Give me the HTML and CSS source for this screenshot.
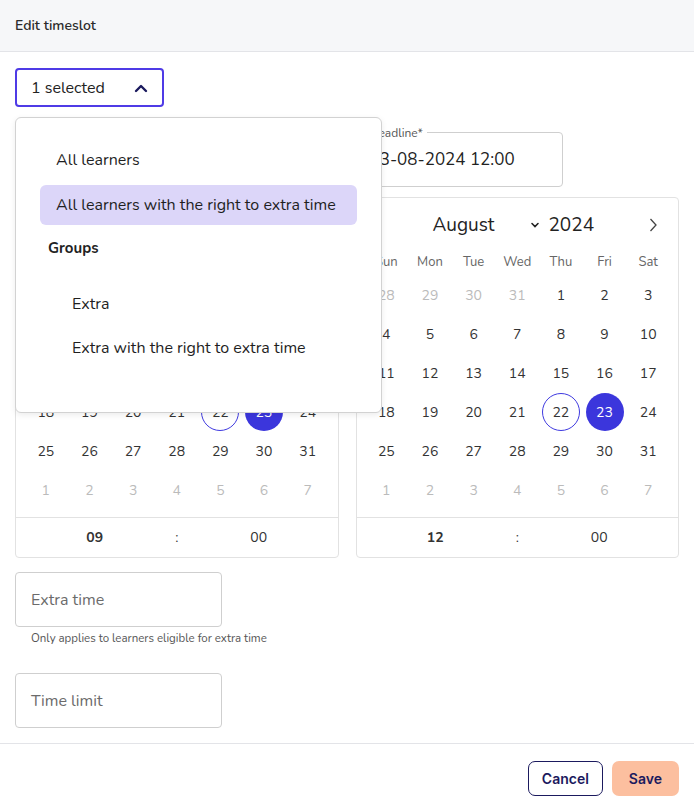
FILE: index.html
```html
<!DOCTYPE html>
<html lang="en">
<head>
    <meta charset="UTF-8">
    <meta name="viewport" content="width=device-width, initial-scale=1.0">
    <title>Edit timeslot</title>
    <link rel="stylesheet" href="styles.css">
</head>
<body>

    <header class="modal-head">Edit timeslot</header>

    <main class="modal-body">
        <div class="select-wrap">
            <button class="select">
                <span>1 selected</span>
                <svg width="14" height="10" viewBox="0 0 14 10"><path d="M2 8 L7 3 L12 8" fill="none" stroke="#1b1a5e" stroke-width="2.4" stroke-linecap="round" stroke-linejoin="round"/></svg>
            </button>

            <!-- open dropdown menu -->
            <div class="menu">
                <div class="menu-item">All learners</div>
                <div class="menu-item active">All learners with the right to extra time</div>
                <div class="menu-group">Groups</div>
                <div class="menu-item sub first">Extra</div>
                <div class="menu-item sub">Extra with the right to extra time</div>
            </div>
        </div>

        <div class="pickers">
            <div class="picker">
                <div class="field">
                    <span class="field-label">Start*</span>
                    <span class="field-value">22-08-2024 09:00</span>
                </div>
                <div class="calendar" id="calStart" data-time="09"></div>
            </div>
            <div class="picker">
                <div class="field">
                    <span class="field-label">Deadline*</span>
                    <span class="field-value">23-08-2024 12:00</span>
                </div>
                <div class="calendar" id="calEnd" data-time="12"></div>
            </div>
        </div>

        <div class="input">Extra time</div>
        <p class="hint">Only applies to learners eligible for extra time</p>

        <div class="input limit">Time limit</div>
    </main>

    <footer class="modal-foot">
        <button class="btn btn-outline">Cancel</button>
        <button class="btn btn-save">Save</button>
    </footer>

    <script>
        // Build the two August 2024 calendars
        const weekdays = ['Sun', 'Mon', 'Tue', 'Wed', 'Thu', 'Fri', 'Sat'];

        function buildCalendar(el) {
            let html = '<div class="cal-head">';
            html += '<svg class="cal-nav" width="10" height="16" viewBox="0 0 10 16"><path d="M7.5 2 L2 8 L7.5 14" fill="none" stroke="#444" stroke-width="1.3"/></svg>';
            html += '<div class="cal-title"><span class="cal-month">August<svg width="10" height="8" viewBox="0 0 10 8"><path d="M2 2.5 L5 5.5 L8 2.5" fill="none" stroke="#222" stroke-width="1.6" stroke-linecap="round"/></svg></span><span class="cal-year">2024</span></div>';
            html += '<svg class="cal-nav" width="10" height="16" viewBox="0 0 10 16"><path d="M2.5 2 L8 8 L2.5 14" fill="none" stroke="#444" stroke-width="1.3"/></svg>';
            html += '</div>';

            html += '<div class="cal-grid">';
            weekdays.forEach(d => { html += `<span class="cal-wd">${d}</span>`; });

            // previous month tail: 28-31 July
            [28, 29, 30, 31].forEach(d => { html += `<span class="cal-day muted">${d}</span>`; });
            for (let d = 1; d <= 31; d++) {
                let cls = 'cal-day';
                if (d === 22) cls += ' today';
                if (d === 23) cls += ' picked';
                html += `<span class="${cls}">${d}</span>`;
            }
            for (let d = 1; d <= 7; d++) {
                html += `<span class="cal-day muted">${d}</span>`;
            }
            html += '</div>';

            html += `<div class="cal-time"><b>${el.dataset.time}</b><span>:</span><span>00</span></div>`;
            el.innerHTML = html;
        }

        document.querySelectorAll('.calendar').forEach(buildCalendar);
    </script>

</body>
</html>
```

FILE: styles.css
```css
* {
    box-sizing: border-box;
}
body {
    margin: 0;
    font-family: "Nunito", "Lato", "Open Sans", sans-serif;
    color: #222;
    background: #fff;
}
button {
    font-family: inherit;
}
.modal-head {
    height: 52px;
    padding: 0 15px;
    line-height: 51px;
    font-size: 14px;
    font-weight: 600;
    color: #2b2b2b;
    background: #f6f7f9;
    border-bottom: 1px solid #e3e4e8;
}
.modal-body {
    padding: 16px 15px 15px;
}
.select-wrap {
    position: relative;
}
.select {
    width: 149px;
    height: 39px;
    display: flex;
    align-items: center;
    justify-content: space-between;
    padding: 0 14px 0 14px;
    font-size: 16px;
    color: #222;
    background: #fff;
    border: 2px solid #4f3be6;
    border-radius: 4px;
}
/* Dropdown menu sits over the pickers */
.menu {
    position: absolute;
    top: 49px;
    left: 0;
    width: 367px;
    padding: 22px 24px 44px;
    background: #fff;
    border: 1px solid #d2d2d2;
    border-radius: 6px;
    box-shadow: 0 2px 6px rgba(0, 0, 0, 0.08);
    z-index: 5;
}
.menu-item {
    height: 40px;
    line-height: 40px;
    padding: 0 16px;
    font-size: 16px;
    color: #1f1f1f;
    border-radius: 6px;
}
.menu-item.active {
    margin-top: 5px;
    background: #dcd6f9;
}
.menu-group {
    margin-top: 5px;
    height: 36px;
    line-height: 36px;
    padding-left: 8px;
    font-size: 15px;
    font-weight: 700;
}
.menu-item.sub {
    padding-left: 32px;
    margin-top: 4px;
}
.menu-item.sub.first {
    margin-top: 18px;
}
.pickers {
    display: grid;
    grid-template-columns: minmax(0, 1fr) minmax(0, 1fr);
    gap: 17px;
    margin-top: 25px;
}
.field {
    position: relative;
    width: 207px;
    height: 55px;
    padding: 0 13px;
    display: flex;
    align-items: center;
    border: 1px solid #cfcfcf;
    border-radius: 4px;
}
.field-label {
    position: absolute;
    top: -8px;
    left: 9px;
    padding: 0 4px;
    font-size: 12px;
    color: #555;
    background: #fff;
}
.field-value {
    font-size: 17px;
    color: #222;
}
.calendar {
    margin-top: 10px;
    border: 1px solid #e2e2e2;
    border-radius: 4px;
}
.cal-head {
    height: 38px;
    margin: 8px 8px 0;
    display: flex;
    align-items: center;
    justify-content: space-between;
    padding: 0 12px 0 8px;
}
.cal-title {
    display: flex;
    align-items: center;
    gap: 8px;
    margin-right: 4px;
}
.cal-month {
    width: 108px;
    display: flex;
    align-items: center;
    justify-content: space-between;
    font-size: 19px;
}
.cal-year {
    font-size: 19px;
}
.cal-grid {
    display: grid;
    grid-template-columns: repeat(7, 1fr);
    grid-template-rows: 32px;
    grid-auto-rows: 39px;
    padding: 0 8px 7px;
}
.cal-wd {
    display: flex;
    align-items: center;
    justify-content: center;
    padding-top: 3px;
    font-size: 13px;
    color: #666;
}
.cal-day {
    width: 38px;
    height: 38px;
    margin: 0 auto;
    display: flex;
    align-items: center;
    justify-content: center;
    font-size: 14px;
    color: #333;
    border-radius: 50%;
}
.cal-day.muted {
    color: #bbb;
}
.cal-day.today {
    border: 1px solid #3f3ae0;
}
.cal-day.picked {
    background: #3b36dc;
    color: #fff;
}
.cal-time {
    height: 40px;
    display: grid;
    grid-template-columns: 82px 82px 82px;
    justify-content: center;
    align-items: center;
    justify-items: center;
    font-size: 14px;
    color: #333;
    border-top: 1px solid #e2e2e2;
}
.input {
    width: 207px;
    height: 55px;
    margin-top: 14px;
    padding: 0 15px;
    display: flex;
    align-items: center;
    font-size: 16px;
    color: #6b6b6b;
    border: 1px solid #cfcfcf;
    border-radius: 4px;
}
.input.limit {
    margin-top: 27px;
}
.hint {
    margin: 3px 0 0 16px;
    font-size: 11.5px;
    color: #555;
}
.modal-foot {
    display: flex;
    justify-content: flex-end;
    gap: 9px;
    padding: 17px 15px 16px;
    border-top: 1px solid #e3e4e8;
}
.btn {
    height: 35px;
    padding: 0 13px;
    font-family: "Inter", "Noto Sans", sans-serif;
    font-size: 14px;
    font-weight: 600;
    color: #1b1a5e;
    border-radius: 7px;
}
.btn-outline {
    background: #fff;
    border: 1.5px solid #1b1a5e;
}
.btn-save {
    padding: 0 17px;
    background: #fcbf9f;
    border: none;
}
```
